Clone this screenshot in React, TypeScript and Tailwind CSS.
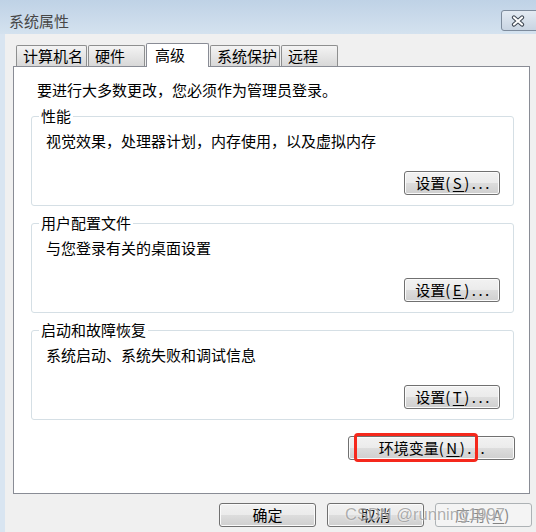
import React from "react";

type BtnProps = {
    children: React.ReactNode;
    className?: string;
    disabled?: boolean;
};

// Win7 style push button
function WinButton({ children, className = "", disabled = false }: BtnProps) {
    return (
        <button
            type="button"
            disabled={disabled}
            className={`flex items-center justify-center rounded-[3px] border text-[15px] leading-[20px] ${
                disabled
                    ? "border-[#adb2b5] bg-[#f4f4f4] text-[#838383]"
                    : "border-[#707070] bg-[linear-gradient(#f2f2f2_0%,#ebebeb_50%,#dddddd_50%,#cfcfcf_100%)] shadow-[inset_0_0_0_1px_#fbfbfb] text-black"
            } ${className}`}
        >
            {children}
        </button>
    );
}

// "(X)..." part of a label, half-width spacing like the system font
function Hotkey({ k, dots = true }: { k: string; dots?: boolean }) {
    return (
        <span className="tracking-[2.5px]">
            (<span className="underline underline-offset-2">{k}</span>){dots ? "..." : ""}
        </span>
    );
}

type GroupProps = {
    title: string;
    desc: string;
    hotkey: string;
    className?: string;
};

function Group({ title, desc, hotkey, className = "" }: GroupProps) {
    return (
        <div
            className={`flex flex-col w-[483px] h-[90px] ml-[17px] border border-[#d5dfe5] rounded-[3px] ${className}`}
        >
            <span className="-mt-[11px] ml-[7px] px-[2px] w-fit bg-white leading-[20px]">
                {title}
            </span>
            <p className="mt-[5px] pl-[14px] leading-[20px]">{desc}</p>
            <div className="mt-[20px] flex justify-end pr-[13px]">
                <WinButton className="w-[96px] h-[24px] pl-[3px]">
                    设置<Hotkey k={hotkey} />
                </WinButton>
            </div>
        </div>
    );
}

const tabs = [
    { label: "计算机名", w: "w-[71px]" },
    { label: "硬件", w: "w-[57px]" },
    { label: "高级", w: "w-[63px]", active: true },
    { label: "系统保护", w: "w-[70px]" },
    { label: "远程", w: "w-[57px]" },
];

export default function App() {
    return (
        <div className="relative w-[536px] h-[532px] overflow-hidden font-['Noto_Sans_CJK_SC',sans-serif] text-[15px] text-black">
            {/* Title bar */}
            <div className="flex justify-between h-[34px] bg-gradient-to-b from-[#bfd2e6] to-[#d4e2ef]">
                <span className="pl-[9px] pt-[11px] leading-[20px] text-[#474747]">系统属性</span>
                <div className="flex items-center shrink-0 w-[44px] h-[21px] mt-[10px] -mr-[9px] pl-[9px] rounded-[3px] border border-[#7d8b9c] bg-gradient-to-b from-[#e4ebf3] to-[#c8d4e2]">
                    <svg width="14" height="12" viewBox="0 0 14 12">
                        <path d="M3 2.5 L11 9.5 M11 2.5 L3 9.5" stroke="#3d4652" strokeWidth="4.2" strokeLinecap="round" />
                        <path d="M3 2.5 L11 9.5 M11 2.5 L3 9.5" stroke="#ffffff" strokeWidth="2.2" strokeLinecap="round" />
                    </svg>
                </div>
            </div>

            <div className="flex h-[498px]">
                <div className="w-[5px] bg-[#d9e5f1]" />
                <div className="flex-1 flex flex-col pt-[9px] bg-[#f0f0f0]">
                    {/* Tabs */}
                    <div className="flex items-end gap-[1px] ml-[11px]">
                        {tabs.map((t) =>
                            t.active ? (
                                <div
                                    key={t.label}
                                    className={`relative z-10 -mb-px flex items-center h-[24px] pl-[8px] pb-[2px] ${t.w} border border-b-0 border-[#898c95] rounded-t-[2px] bg-white leading-[20px]`}
                                >
                                    {t.label}
                                </div>
                            ) : (
                                <div
                                    key={t.label}
                                    className={`flex items-center h-[21px] pl-[6px] ${t.w} border border-b-0 border-[#8e8f8f] rounded-t-[2px] bg-gradient-to-b from-[#f4f4f4] to-[#d8d8d8] leading-[20px]`}
                                >
                                    {t.label}
                                </div>
                            )
                        )}
                    </div>

                    {/* Tab panel */}
                    <div className="flex flex-col w-[517px] h-[428px] ml-[8px] pt-[13px] border border-[#898c95] bg-white">
                        <p className="pl-[23px] leading-[20px]">要进行大多数更改，您必须作为管理员登录。</p>
                        <Group className="mt-[16px]" title="性能" desc="视觉效果，处理器计划，内存使用，以及虚拟内存" hotkey="S" />
                        <Group className="mt-[17px]" title="用户配置文件" desc="与您登录有关的桌面设置" hotkey="E" />
                        <Group className="mt-[17px]" title="启动和故障恢复" desc="系统启动、系统失败和调试信息" hotkey="T" />
                        <div className="flex justify-end mt-[16px] pr-[14px]">
                            <div className="relative">
                                <WinButton className="w-[167px] h-[24px] pl-[3px]">
                                    环境变量<Hotkey k="N" />
                                </WinButton>
                                {/* red highlight annotation */}
                                <div className="absolute left-[6px] -top-[3px] w-[124px] h-[29px] rounded-[4px] border-[3px] border-[#f5281c]" />
                            </div>
                        </div>
                    </div>

                    {/* Dialog buttons */}
                    <div className="flex justify-end gap-[11px] mt-[9px] pr-[4px]">
                        <WinButton className="w-[97px] h-[24px]">确定</WinButton>
                        <WinButton className="w-[97px] h-[24px]">取消</WinButton>
                        <WinButton className="w-[97px] h-[24px]" disabled>
                            应用<Hotkey k="A" dots={false} />
                        </WinButton>
                    </div>
                </div>
            </div>

            {/* watermark */}
            <span className="absolute left-[345px] top-[503px] font-['Liberation_Sans',sans-serif] text-[16.5px] leading-[22px] text-[#7a7a7a]/60 [text-shadow:0_0_2px_#ffffff]">
                CSDN @running1997
            </span>
        </div>
    );
}
